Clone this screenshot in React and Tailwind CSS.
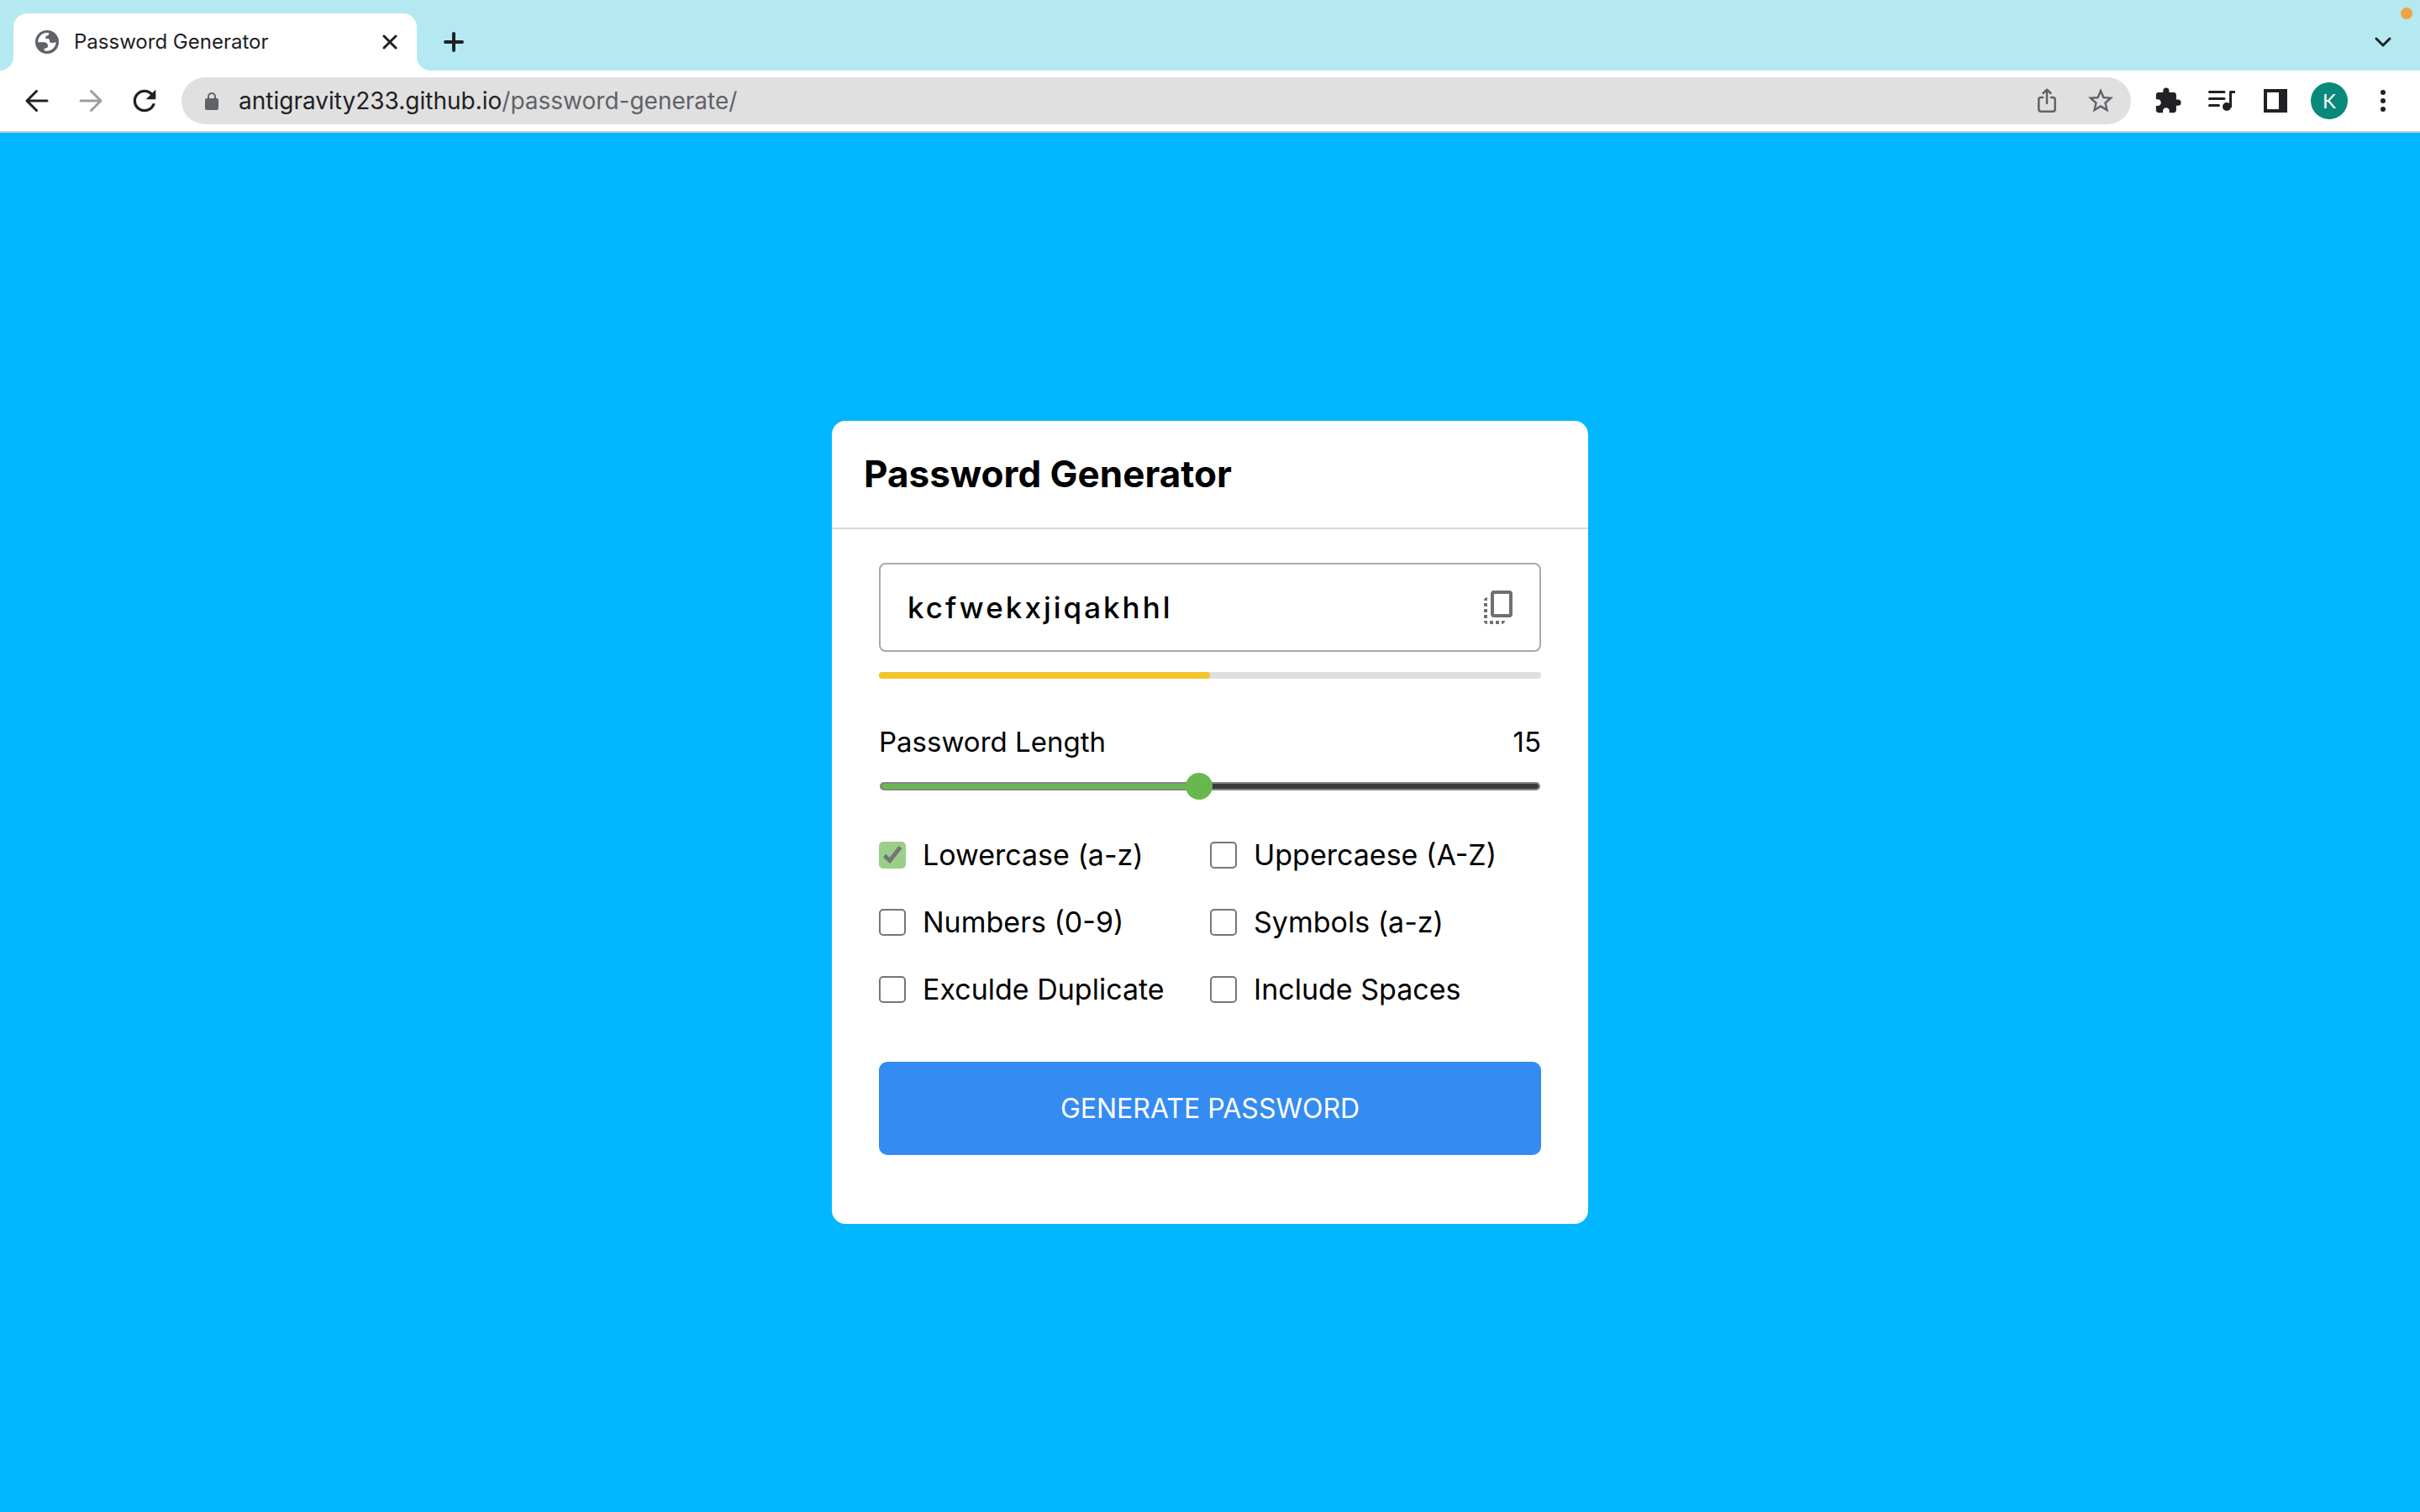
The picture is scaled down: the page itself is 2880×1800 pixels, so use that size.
import { useState } from "react";
import { MdExtension, MdStarBorder, MdRefresh } from "react-icons/md";

const IconButton = ({ label, className = "", children }) => (
  <button type="button" aria-label={label} className={`flex h-12 w-12 shrink-0 items-center justify-center ${className}`}>
    {children}
  </button>
);

const stroke = { fill: "none", stroke: "currentColor", strokeLinecap: "round", strokeLinejoin: "round" };

function GlobeIcon() {
  return (
    <svg viewBox="0 0 28 28" className="h-7 w-7 text-[#5f6368]">
      <circle cx="14" cy="14" r="14" fill="currentColor" />
      <path
        fill="#fff"
        d="M3.300 14.200A10.700 10.700 0 0 1 16.200 3.200V4.600Q16 6.500 13.500 6.700 12.200 6.900 12.200 8.400V9.900H15.300Q16.800 10.200 17 11.800V13.300Q17.300 14.800 19 15H21.500L24.600 14A10.700 10.700 0 0 1 10.700 24.200V21.400H13Q15 21 15 18.800 14.900 14.300 10 14.200Z"
      />
    </svg>
  );
}

function LockIcon() {
  return (
    <svg viewBox="0 0 16 21" className="h-[21px] w-4 text-[#5f6368]">
      <rect y="7" width="16" height="14" rx="2" fill="currentColor" />
      <path d="M4 8V5A4 4 0 0 1 12 5V8" fill="none" stroke="currentColor" strokeWidth="2" />
    </svg>
  );
}

function CopyIcon() {
  return (
    <svg viewBox="0 0 34 40" className="h-10 w-[34px]" fill="currentColor">
      <rect x="10" y="2" width="22" height="28" rx="2" fill="none" stroke="currentColor" strokeWidth="4" />
      <path d="M0 12Q0 8.500 4 8V12ZM0 15H4V19H0ZM0 22H4V26H0ZM0 29H4V33H0ZM0 36H4V40Q0 40 0 36ZM7 36H11V40H7ZM14 36H18V40H14ZM21 36H25Q25 39.500 21 40Z" />
    </svg>
  );
}

function TabStrip() {
  return (
    <div className="flex h-[84px] items-end bg-[#b4e9f2]">
      <div className="h-4 w-4 bg-white">
        <div className="h-4 w-4 rounded-br-2xl bg-[#b4e9f2]" />
      </div>
      <div className="flex h-[68px] w-[480px] items-center rounded-t-2xl bg-white pl-[26px] pr-2">
        <GlobeIcon />
        <span className="ml-[18px] flex-1 text-2xl text-[#202124]">Password Generator</span>
        <IconButton label="Close tab" className="text-[#202124]">
          <svg viewBox="0 0 18 18" className="h-[18px] w-[18px]" {...stroke} strokeWidth="3">
            <path d="M2 2 16 16M16 2 2 16" />
          </svg>
        </IconButton>
      </div>
      <div className="h-4 w-4 bg-white">
        <div className="h-4 w-4 rounded-bl-2xl bg-[#b4e9f2]" />
      </div>
      <div className="flex h-[68px] flex-1 items-center justify-between pl-1 pr-5 text-[#202124]">
        <IconButton label="New tab">
          <svg viewBox="0 0 24 24" className="h-6 w-6" {...stroke} strokeWidth="4">
            <path d="M12 2V22M2 12H22" />
          </svg>
        </IconButton>
        <IconButton label="Search tabs">
          <svg viewBox="0 0 20 12" className="h-3 w-5" {...stroke} strokeWidth="3">
            <path d="M2 2 10 10 18 2" />
          </svg>
        </IconButton>
      </div>
    </div>
  );
}

function Toolbar() {
  return (
    <div className="flex h-[74px] items-center border-b-2 border-[#cbcdcd] bg-white pl-5 pr-5 text-[#202124]">
      <IconButton label="Back">
        <svg viewBox="0 0 28 28" className="h-7 w-7" {...stroke} strokeWidth="3">
          <path d="M26 14H2.500M13.500 2.500 2 14 13.500 25.500" />
        </svg>
      </IconButton>
      <IconButton label="Forward" className="ml-4 text-[#9e9e9e]">
        <svg viewBox="0 0 28 28" className="h-7 w-7" {...stroke} strokeWidth="3">
          <path d="M2 14H25.500M14.500 2.500 26 14 14.500 25.500" />
        </svg>
      </IconButton>
      <IconButton label="Reload" className="ml-4">
        <MdRefresh className="h-10 w-10" />
      </IconButton>
      <div className="ml-5 flex h-14 flex-1 items-center rounded-full bg-[#e0e0e0] pl-7 pr-3">
        <LockIcon />
        <a href="#address" className="ml-6 flex-1 text-[28px] leading-9">
          antigravity233.github.io<span className="text-[#5f6368]">/password-generate/</span>
        </a>
        <IconButton label="Share" className="text-[#5f6368]">
          <svg viewBox="0 0 24 30" className="h-[30px] w-6" {...stroke} strokeWidth="2.500">
            <path d="M7 11H5Q2.300 11 2.300 13.500V25Q2.300 27.700 5 27.700H19Q21.700 27.700 21.700 25V13.500Q21.700 11 19 11H17M12 18V2M7.500 6 12 1.700 16.500 6" />
          </svg>
        </IconButton>
        <IconButton label="Bookmark this page" className="ml-4 text-[#5f6368]">
          <MdStarBorder className="h-9 w-9" />
        </IconButton>
      </div>
      <IconButton label="Extensions" className="ml-5">
        <MdExtension className="h-[34px] w-[34px]" />
      </IconButton>
      <IconButton label="Media control" className="ml-4">
        <svg viewBox="0 0 32 26" className="h-[26px] w-8" {...stroke} strokeWidth="3">
          <path d="M1.500 2.500H19M1.500 10.500H19M1.500 18.500H12.500M26.500 20V2.500H31" />
          <circle cx="22" cy="20" r="5" fill="currentColor" stroke="none" />
        </svg>
      </IconButton>
      <IconButton label="Side panel" className="ml-4">
        <svg viewBox="0 0 28 28" className="h-7 w-7">
          <path fillRule="evenodd" fill="currentColor" d="M0 0H28V28H0ZM4 4V24H18V4Z" />
        </svg>
      </IconButton>
      <IconButton label="Profile" className="ml-4">
        <span className="flex h-11 w-11 items-center justify-center rounded-full bg-[#09897b] font-['Lato','Inter',sans-serif] text-2xl text-white">K</span>
      </IconButton>
      <IconButton label="Menu" className="ml-4">
        <svg viewBox="0 0 6 26" className="h-[26px] w-[6px]" fill="currentColor">
          <circle cx="3" cy="3" r="3" />
          <circle cx="3" cy="13" r="3" />
          <circle cx="3" cy="23" r="3" />
        </svg>
      </IconButton>
    </div>
  );
}

const options = [
  "Lowercase (a-z)",
  "Uppercaese (A-Z)",
  "Numbers (0-9)",
  "Symbols (a-z)",
  "Exculde Duplicate",
  "Include Spaces",
];

function Option({ label, locked }) {
  return (
    <label className="flex h-[54px] items-center gap-5 whitespace-nowrap text-[34px] leading-[54px]">
      <span className="grid h-8 w-8 shrink-0">
        <input
          type="checkbox"
          defaultChecked={locked}
          disabled={locked}
          className="peer col-start-1 row-start-1 h-8 w-8 appearance-none rounded-[5px] border-2 border-[#767676] bg-white checked:border-[#99cf88] checked:bg-[#99cf88]"
        />
        <svg viewBox="0 0 32 32" className="pointer-events-none col-start-1 row-start-1 hidden h-8 w-8 peer-checked:block" fill="none" stroke="#757575" strokeWidth="5">
          <path d="M6.500 16.500 13 22.500 25.500 6.500" />
        </svg>
      </span>
      {label}
    </label>
  );
}

function Generator() {
  const [length, setLength] = useState(15);
  const filled = ((length - 1) / 29) * 100;
  return (
    <section className="w-[900px] rounded-2xl bg-white text-black">
      <h2 className="border-b-2 border-[#d4dbe5] px-[38px] pb-[33px] pt-8 text-[44px] font-bold leading-[62px]">Password Generator</h2>
      <div className="mx-14 mt-10 pb-[82px]">
        <div className="flex h-[106px] items-center rounded-lg border-2 border-[#aaaaaa] px-8">
          <input
            type="text"
            aria-label="Generated password"
            readOnly
            value="kcfwekxjiqakhhl"
            className="min-w-0 flex-1 bg-transparent text-[35px] font-medium tracking-[3px] outline-none"
          />
          <button type="button" aria-label="Copy password" className="text-[#707070]">
            <CopyIcon />
          </button>
        </div>
        <div className="mt-6 h-2 rounded-full bg-[#dfdfdf]">
          <div className="h-2 w-1/2 rounded-full bg-[#f2c52d]" />
        </div>
        <div className="mt-12 flex justify-between text-[33px] leading-[54px]">
          <label htmlFor="length">Password Length</label>
          <output htmlFor="length">{length}</output>
        </div>
        <div className="mt-[10px] grid h-8 items-center">
          <div className="col-start-1 row-start-1 mx-px h-[10px] overflow-hidden rounded-full border-2 border-[#858585] bg-[#3b3b3b]">
            <div className="h-full bg-[#68b84f]" style={{ width: `${filled}%` }} />
          </div>
          <input
            id="length"
            type="range"
            min="1"
            max="30"
            value={length}
            onChange={(e) => setLength(Number(e.target.value))}
            className="col-start-1 row-start-1 h-8 w-full appearance-none bg-transparent [&::-webkit-slider-thumb]:h-8 [&::-webkit-slider-thumb]:w-8 [&::-webkit-slider-thumb]:appearance-none [&::-webkit-slider-thumb]:rounded-full [&::-webkit-slider-thumb]:bg-[#68b84f]"
          />
        </div>
        <div className="mt-[39px] grid grid-cols-2 gap-y-[26px]">
          {options.map((label, i) => (
            <Option key={label} label={label} locked={i === 0} />
          ))}
        </div>
        <button type="button" className="mt-[59px] h-[111px] w-full rounded-[10px] bg-[#348bf2] text-[32px] text-white">
          GENERATE PASSWORD
        </button>
      </div>
    </section>
  );
}

export default function App() {
  return (
    <div className="relative flex min-h-screen flex-col bg-[#00b7ff] font-['Inter',sans-serif]">
      <TabStrip />
      <Toolbar />
      <main className="flex flex-1 items-center justify-center">
        <Generator />
      </main>
      <span className="absolute right-[9px] top-[9px] h-[14px] w-[14px] rounded-full bg-[#f2a245]" />
    </div>
  );
}
